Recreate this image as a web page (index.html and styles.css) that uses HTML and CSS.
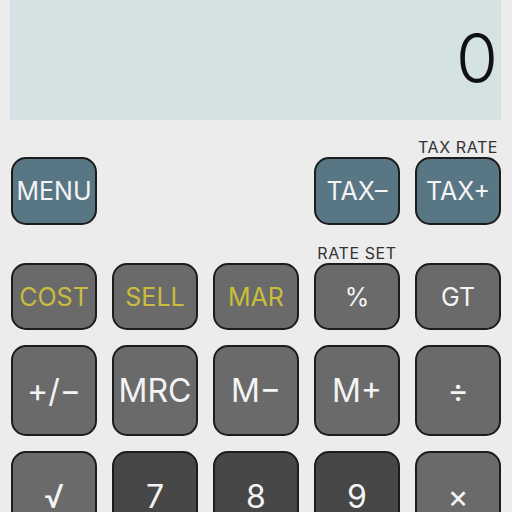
FILE: index.html
```html
<!DOCTYPE html>
<html>
<head>
<meta charset="utf-8">
<link rel="stylesheet" href="styles.css">
</head>
<body>
<div class="screen">
  <div class="display"><span class="value">0</span></div>
  <div class="row row1">
    <div class="key blue">MENU</div>
    <div class="spacer"></div>
    <div class="spacer"></div>
    <div class="key blue">TAX&#8211;</div>
    <div class="key blue"><span class="cap">TAX RATE</span>TAX+</div>
  </div>
  <div class="row row2">
    <div class="key gray gold">COST</div>
    <div class="key gray gold">SELL</div>
    <div class="key gray gold">MAR</div>
    <div class="key gray"><span class="cap">RATE SET</span>%</div>
    <div class="key gray">GT</div>
  </div>
  <div class="row row3">
    <div class="key gray big">+/&#8722;</div>
    <div class="key gray big">MRC</div>
    <div class="key gray big">M&#8722;</div>
    <div class="key gray big">M+</div>
    <div class="key gray big">&#247;</div>
  </div>
  <div class="row row4">
    <div class="key gray big">&#8730;</div>
    <div class="key dark big">7</div>
    <div class="key dark big">8</div>
    <div class="key dark big">9</div>
    <div class="key gray big">&#215;</div>
  </div>
</div>
</body>
</html>
```
FILE: styles.css
```css
html, body {
  margin: 0;
  padding: 0;
  width: 512px;
  height: 512px;
  overflow: hidden;
  background: #ebeceb;
  font-family: Inter, "Liberation Sans", sans-serif;
}
.screen {
  width: 512px;
  height: 512px;
  overflow: hidden;
}
.display {
  margin: 0 11px 0 10px;
  height: 120px;
  background: #d4e2e3;
  display: flex;
  align-items: center;
  justify-content: flex-end;
  padding-right: 3px;
  box-sizing: border-box;
}
.value {
  font-size: 68px;
  font-weight: 350;
  color: #111;
  line-height: 1;
  margin-top: -4px;
}
.row {
  display: flex;
  gap: 15px;
  padding: 0 11px;
}
.row1 { margin-top: 37px; height: 68px; }
.row2 { margin-top: 38px; height: 67px; }
.row3 { margin-top: 15px; height: 91px; }
.row4 { margin-top: 15px; height: 91px; }
.spacer { width: 86px; flex: none; }
.key {
  position: relative;
  width: 86px;
  flex: none;
  box-sizing: border-box;
  border: 2px solid #1c1c1c;
  border-radius: 15px;
  display: flex;
  align-items: center;
  justify-content: center;
  color: #f4f4f4;
  font-size: 25px;
  font-weight: 400;
}
.blue { background: #587684; }
.gray { background: #6a6a6a; }
.dark { background: #474747; }
.gold { color: #cbbd3c; }
.big { font-size: 32px; }
.cap {
  position: absolute;
  bottom: calc(100% + 2px);
  left: 50%;
  transform: translateX(-50%);
  white-space: nowrap;
  font-size: 16px;
  letter-spacing: 0.6px;
  color: #333;
}
```
